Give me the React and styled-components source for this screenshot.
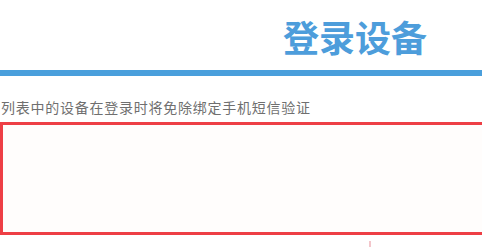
import React from "react";
import styled, { createGlobalStyle } from "styled-components";

const GlobalStyle = createGlobalStyle`
  html, body {
    margin: 0;
    padding: 0;
    background: #fff;
    overflow: hidden;
  }
  body {
    font-family: "Noto Sans CJK SC", "Noto Sans", sans-serif;
  }
`;

const App = () => {
  return (
    <Page>
      <GlobalStyle />
      <Header>
        <Title>登录设备</Title>
      </Header>
      <Bar />
      <Note>列表中的设备在登录时将免除绑定手机短信验证</Note>
      <DeviceList />
      <Footer>
        <Mark />
      </Footer>
    </Page>
  );
};

export default App;

const Page = styled.div`
  width: 482px;
  height: 248px;
  overflow: hidden;
`;

const Header = styled.header`
  display: flex;
  justify-content: flex-end;
  height: 70px;
  padding-right: 55px;
  box-sizing: border-box;
`;

const Title = styled.h1`
  margin: 0;
  padding-top: 18px;
  font-size: 36px;
  line-height: 36px;
  font-weight: 700;
  color: #4d9ddb;
  letter-spacing: 0;
`;

const Bar = styled.div`
  height: 6px;
  background-color: #4a9fdc;
`;

const Note = styled.p`
  margin: 21px 0 0 1px;
  font-size: 14px;
  line-height: 20px;
  letter-spacing: 0.75px;
  color: #6f6f6f;
  white-space: nowrap;
`;

const DeviceList = styled.div`
  margin-top: 5px;
  width: 520px;
  height: 113px;
  box-sizing: border-box;
  border: 3px solid #ee3f45;
  background-color: #fffdfc;
`;

const Footer = styled.div`
  display: flex;
  padding: 6px 0 0 369px;
`;

const Mark = styled.span`
  width: 2px;
  height: 6px;
  background-color: #f3c6cb;
`;
